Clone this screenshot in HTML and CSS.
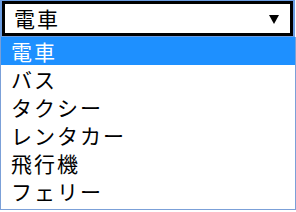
FILE: index.html
```html
<!DOCTYPE html>
<html lang="ja">
  <head>
    <meta charset="UTF-8" />
    <meta name="viewport" content="width=device-width, initial-scale=1.0" />
    <title>交通手段</title>
    <link rel="stylesheet" href="styles.css">
  </head>
  <body>
    <div class="picker">
      <div class="select">
        <span class="select-value">電車</span>
        <svg class="arrow" width="10" height="10" viewBox="0 0 10 10">
          <polygon points="0,1 10,1 5,10" fill="#000" />
        </svg>
      </div>
      <ul class="options">
        <li class="option selected">電車</li>
        <li class="option">バス</li>
        <li class="option">タクシー</li>
        <li class="option">レンタカー</li>
        <li class="option">飛行機</li>
        <li class="option">フェリー</li>
      </ul>
    </div>
  </body>
</html>
```

FILE: styles.css
```css
body {
  margin: 0;
  background-color: #ffffff;
  font-family: "Noto Sans CJK JP", "DejaVu Sans", sans-serif;
  color: #000000;
}

.picker {
  width: 296px;
}

.select {
  display: flex;
  align-items: center;
  justify-content: space-between;
  box-sizing: border-box;
  height: 35px;
  margin: 1px 3px 0 2px;
  padding: 0 11px 0 9px;
  border: 3px solid #000000;
  box-shadow: 0 0 0 2px #6b9de2;
  font-size: 21px;
  letter-spacing: 2px;
}

.select-value {
  line-height: 1;
}

.arrow {
  display: block;
  margin-top: 1px;
}

.options {
  list-style: none;
  margin: 1px 0 0 0;
  padding: 0 0 4px 0;
  box-sizing: border-box;
  width: 296px;
  border: 1px solid #7ba0d8;
  border-top: none;
  font-size: 21px;
  letter-spacing: 2px;
}

.option {
  height: 28px;
  line-height: 28px;
  padding-left: 10px;
}

.option.selected {
  background-color: #1e90ff;
  color: #ffffff;
}
```
